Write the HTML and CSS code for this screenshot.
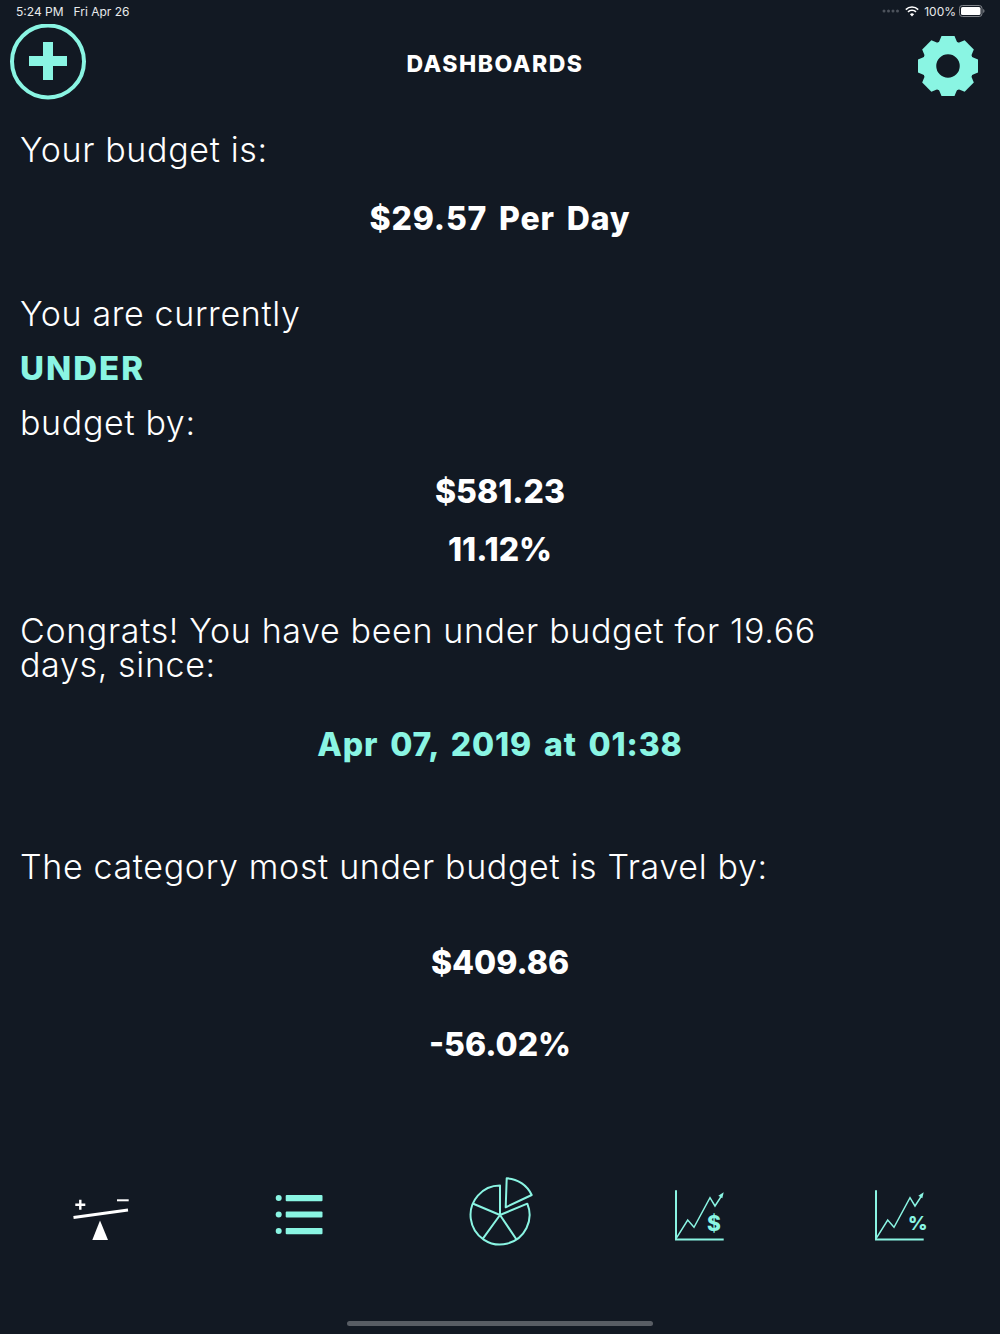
FILE: index.html
```html
<!DOCTYPE html>
<html lang="en">
<head>
<meta charset="utf-8">
<title>Dashboards</title>
<link rel="stylesheet" href="styles.css">
</head>
<body>
<div class="status">
  <div class="status-left"><span>5:24 PM</span><span>Fri Apr 26</span></div>
  <div class="status-right">
    <svg class="signal" width="18" height="4" viewBox="0 0 18 4"><g fill="#4d535c"><circle cx="2" cy="2" r="1.5"/><circle cx="6.5" cy="2" r="1.5"/><circle cx="11" cy="2" r="1.5"/><circle cx="15.5" cy="2" r="1.5"/></g></svg>
    <svg class="wifi" width="14" height="11" viewBox="0 0 14 11"><g fill="none" stroke="#fff" stroke-width="1.6"><path d="M.8 3.6a8.8 8.8 0 0 1 12.4 0"/><path d="M3 5.9a5.6 5.6 0 0 1 8 0"/></g><path d="M7 10.6 4.9 8.2a3 3 0 0 1 4.2 0z" fill="#fff"/></svg>
    <span>100%</span>
    <svg class="battery" width="26" height="12" viewBox="0 0 26 12"><rect x=".5" y=".5" width="22.5" height="11" rx="2.8" fill="none" stroke="#81858b"/><rect x="2" y="2" width="19.5" height="8" rx="1.5" fill="#fff"/><path d="M24.2 4v4a2 2 0 0 0 1.3-2 2 2 0 0 0-1.3-2z" fill="#81858b"/></svg>
  </div>
</div>
<header class="top">
  <svg class="add" width="76" height="76" viewBox="0 0 76 76"><circle cx="38" cy="37.5" r="36" fill="none" stroke="#8af5e3" stroke-width="4"/><path d="M33 18h10v14h14v10H43v14H33V42H19V32h14z" fill="#8af5e3"/></svg>
  <h1>DASHBOARDS</h1>
  <svg class="gear" width="62" height="62" viewBox="-31 -31 62 62">
    <circle r="18.75" fill="none" stroke="#8af5e3" stroke-width="14"/>
    <g fill="#8af5e3">
      <path d="M-9-24-6.5-30H6.5L9-24z"/>
      <path transform="rotate(45)" d="M-9-24-6.5-30H6.5L9-24z"/>
      <path transform="rotate(90)" d="M-9-24-6.5-30H6.5L9-24z"/>
      <path transform="rotate(135)" d="M-9-24-6.5-30H6.5L9-24z"/>
      <path transform="rotate(180)" d="M-9-24-6.5-30H6.5L9-24z"/>
      <path transform="rotate(225)" d="M-9-24-6.5-30H6.5L9-24z"/>
      <path transform="rotate(270)" d="M-9-24-6.5-30H6.5L9-24z"/>
      <path transform="rotate(315)" d="M-9-24-6.5-30H6.5L9-24z"/>
    </g>
  </svg>
</header>
<main class="content">
  <p class="text">Your budget is:</p>
  <p class="value wide g35">$29.57 Per Day</p>
  <p class="text g61">You are currently</p>
  <p class="state g20">UNDER</p>
  <p class="text g21">budget by:</p>
  <p class="value g35">$581.23</p>
  <p class="value g24">11.12%</p>
  <p class="text g47 narrow">Congrats! You have been under budget for 19.66 days, since:</p>
  <p class="value wide accent g46">Apr 07, 2019 at 01:38</p>
  <p class="text g88">The category most under budget is Travel by:</p>
  <p class="value g62">$409.86</p>
  <p class="value g48">-56.02%</p>
</main>
<nav class="tabs">
  <svg class="tab" width="200" height="90" viewBox="0 1170 200 90"><path d="M73.5 1217.5 128 1210" stroke="#fff" stroke-width="3" fill="none"/><path d="M100 1220.5 92.3 1240H108z" fill="#fff"/><path d="M80.3 1199.7v10M75.3 1204.7h10" stroke="#fff" stroke-width="2.4" fill="none"/><path d="M117 1200.3h11.7" stroke="#fff" stroke-width="2" fill="none"/></svg>
  <svg class="tab" width="200" height="90" viewBox="200 1170 200 90"><g fill="#8af5e3"><circle cx="278.7" cy="1198" r="3"/><circle cx="278.7" cy="1214.4" r="3"/><circle cx="278.7" cy="1231" r="3"/><rect x="285.7" y="1195" width="36.8" height="6.2" rx="1"/><rect x="285.7" y="1211.4" width="36.8" height="6.2" rx="1"/><rect x="285.7" y="1228" width="36.8" height="6.2" rx="1"/></g></svg>
  <svg class="tab" width="200" height="90" viewBox="400 1170 200 90"><g fill="none" stroke="#8af5e3" stroke-width="2" stroke-linejoin="round"><path d="M500 1215V1185.5A29.5 29.5 0 1 0 527.3 1203.7Z"/><path d="M500 1215 472.7 1203.5M500 1215 482.7 1238.8M500 1215 516.5 1239.5"/><path d="M505.7 1207.3 506.7 1178.3A29 29 0 0 1 531.7 1195Z"/></g></svg>
  <div class="chart">
    <svg class="tab" width="200" height="90" viewBox="600 1170 200 90"><g fill="none" stroke="#8af5e3"><path d="M676 1190.3V1239.4H723.7" stroke-width="2"/><path d="M676.7 1237.7 687.7 1220 694 1227.3 710 1197.7 715 1206 721.5 1196" stroke-width="1.5"/></g><path d="M723.7 1192.3 718.3 1195.7 722.3 1198.3z" fill="#8af5e3"/></svg>
    <span class="dollar">$</span>
  </div>
  <div class="chart">
    <svg class="tab" width="200" height="90" viewBox="800 1170 200 90"><g fill="none" stroke="#8af5e3"><path d="M876 1190.3V1239.4H923.7" stroke-width="2"/><path d="M876.7 1237.7 887.7 1220 894 1227.3 910 1197.7 915 1206 921.5 1196" stroke-width="1.5"/></g><path d="M923.7 1192.3 918.3 1195.7 922.3 1198.3z" fill="#8af5e3"/></svg>
    <span class="percent">%</span>
  </div>
</nav>
<div class="home-bar"></div>
</body>
</html>
```
FILE: styles.css
```css
* { box-sizing: border-box; }
html, body { margin: 0; height: 100%; }
body {
  width: 1000px;
  height: 1334px;
  background: #121923;
  color: #fff;
  font-family: Inter, "Liberation Sans", sans-serif;
  display: flex;
  flex-direction: column;
  overflow: hidden;
}
.status {
  height: 24px;
  padding: 0 15px 2px 16px;
  display: flex;
  justify-content: space-between;
  align-items: center;
  font-size: 12px;
  color: #e8eaec;
}
.status-left { display: flex; gap: 10px; }
.status-right { display: flex; align-items: center; gap: 5px; }
.status-right span { margin-right: -2px; }
.top {
  height: 76px;
  padding: 0 21.5px 0 10px;
  display: flex;
  align-items: center;
  justify-content: space-between;
  position: relative;
}
.top h1 {
  position: absolute;
  left: 0;
  width: 990px;
  top: 23px;
  margin: 0;
  text-align: center;
  font-size: 23px;
  line-height: 34px;
  font-weight: 800;
  letter-spacing: 1.5px;
}
.gear { margin-top: 8px; }
.content { flex: 1; padding: 33px 20px 0; }
.content p { margin: 0; line-height: 34px; }
.text { font-size: 34px; font-weight: 300; letter-spacing: .65px; }
.narrow { max-width: 830px; }
.value { font-size: 32px; font-weight: 800; text-align: center; }
.wide { letter-spacing: .85px; word-spacing: 4px; }
.state { font-size: 33px; font-weight: 800; color: #8af5e3; letter-spacing: 2px; }
.accent { color: #8af5e3; }
.g20 { margin-top: 20px !important; }
.g21 { margin-top: 21px !important; }
.g24 { margin-top: 24px !important; }
.g35 { margin-top: 35px !important; }
.g46 { margin-top: 46px !important; }
.g47 { margin-top: 47px !important; }
.g48 { margin-top: 48px !important; }
.g61 { margin-top: 61px !important; }
.g62 { margin-top: 62px !important; }
.g88 { margin-top: 88px !important; }
.tabs {
  height: 90px;
  margin-bottom: 74px;
  display: grid;
  grid-template-columns: repeat(5, 200px);
}
.tab { display: block; }
.chart { position: relative; }
.dollar, .percent {
  position: absolute;
  top: 41px;
  left: 107px;
  font-size: 21px;
  line-height: 26px;
  font-weight: 800;
  color: #8af5e3;
}
.percent { left: 108px; font-size: 19px; }
.home-bar {
  position: absolute;
  left: 347px;
  top: 1321px;
  width: 306px;
  height: 5px;
  border-radius: 3px;
  background: #585d64;
}
```
